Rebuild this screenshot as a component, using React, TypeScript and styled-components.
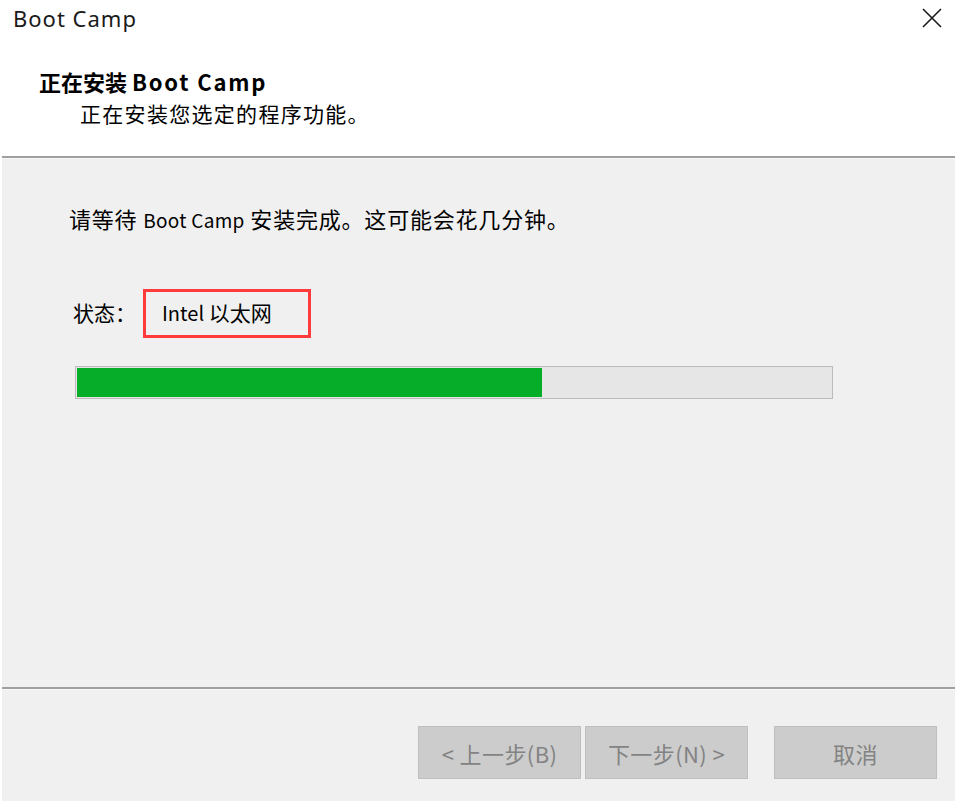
import React from "react";
import styled, { createGlobalStyle } from "styled-components";

const GlobalStyle = createGlobalStyle`
  html, body {
    margin: 0;
    padding: 0;
    background: #ffffff;
  }
  * {
    box-sizing: border-box;
  }
`;

const cjk = `"Noto Sans CJK SC", "Noto Sans", sans-serif`;

const Window = styled.div`
  width: 959px;
  height: 801px;
  background: #ffffff;
  display: flex;
  flex-direction: column;
  font-family: ${cjk};
  color: #000;
  overflow: hidden;
`;

const TitleBar = styled.div`
  height: 36px;
  display: flex;
  align-items: center;
  justify-content: space-between;
  padding: 0 15px 0 13px;
`;

const WindowTitle = styled.span`
  font-family: "Noto Sans", sans-serif;
  font-size: 22px;
  letter-spacing: 1px;
  color: #1a1a1a;
`;

const CloseButton = styled.button`
  width: 24px;
  height: 24px;
  padding: 0;
  border: none;
  background: transparent;
  display: flex;
  align-items: center;
  justify-content: center;
  cursor: pointer;
`;

const Header = styled.div`
  height: 120px;
  padding: 30px 0 0 39px;
  display: flex;
  flex-direction: column;
`;

const HeaderTitle = styled.h1`
  margin: 0;
  font-size: 22px;
  font-weight: 700;
  line-height: 30px;
`;

const Latin = styled.span<{ $size?: number; $spacing?: number }>`
  font-size: ${(p) => p.$size ?? 19}px;
  letter-spacing: ${(p) => p.$spacing ?? 0}px;
`;

const HeaderSub = styled.p`
  margin: 2px 0 0 41px;
  font-size: 21px;
  letter-spacing: 1.3px;
  line-height: 30px;
`;

const Divider = styled.div`
  margin: 0 4px 0 2px;
  height: 3px;
  border-top: 2px solid #a0a0a0;
  border-bottom: 1px solid #f8f8f8;
  flex-shrink: 0;
`;

const Content = styled.div`
  flex: 1;
  margin: 0 4px 0 2px;
  background: #f0f0f0;
  padding: 44px 0 0 67px;
  display: flex;
  flex-direction: column;
`;

const Message = styled.p`
  margin: 0;
  font-size: 22px;
  letter-spacing: 0.8px;
  line-height: 30px;
  white-space: nowrap;
`;

const StatusRow = styled.div`
  margin-top: 54px;
  display: flex;
  align-items: center;
  padding-left: 4px;
`;

const StatusLabel = styled.span`
  font-size: 21px;
  width: 70px;
  padding-bottom: 3px;
`;

const Highlight = styled.div`
  height: 49px;
  width: 168px;
  border: 3px solid #ff3b3b;
  display: flex;
  align-items: center;
  padding: 0 0 3px 16px;
  font-size: 21px;
`;

const Track = styled.div`
  margin: 28px 0 0 6px;
  width: 758px;
  height: 33px;
  border: 1px solid #bcbcbc;
  background: #e6e6e6;
  padding: 1px;
`;

const Fill = styled.div`
  height: 100%;
  background: #05ad28;
`;

const Footer = styled.div`
  margin: 0 4px 0 2px;
  height: 111px;
  background: #f0f0f0;
  display: flex;
  justify-content: flex-end;
  align-items: flex-start;
  padding: 36px 18px 0 0;
`;

const Button = styled.button<{ $gap?: number }>`
  width: 163px;
  height: 53px;
  margin-left: ${(p) => p.$gap ?? 0}px;
  background: #cccccc;
  border: 1px solid #bfbfbf;
  color: #838383;
  font-family: ${cjk};
  font-size: 22px;
  letter-spacing: 0.4px;
  padding: 0;
`;

const progress = 0.617;

const App = () => (
  <>
    <GlobalStyle />
    <Window>
      <TitleBar>
        <WindowTitle>Boot Camp</WindowTitle>
        <CloseButton aria-label="关闭">
          <svg width="20" height="20" viewBox="0 0 20 20">
            <path d="M1 1 L19 19 M19 1 L1 19" stroke="#1a1a1a" strokeWidth="1.6" />
          </svg>
        </CloseButton>
      </TitleBar>
      <Header>
        <HeaderTitle>
          正在安装 <Latin $size={22} $spacing={1.8}>Boot Camp</Latin>
        </HeaderTitle>
        <HeaderSub>正在安装您选定的程序功能。</HeaderSub>
      </Header>
      <Divider />
      <Content>
        <Message>
          请等待 <Latin $spacing={0.3}>Boot Camp</Latin> 安装完成。这可能会花几分钟。
        </Message>
        <StatusRow>
          <StatusLabel>状态：</StatusLabel>
          <Highlight>
            <Latin $size={20}>Intel</Latin>&nbsp;以太网
          </Highlight>
        </StatusRow>
        <Track>
          <Fill style={{ width: `${progress * 100}%` }} />
        </Track>
      </Content>
      <Divider />
      <Footer>
        <Button disabled>&lt; 上一步(B)</Button>
        <Button disabled $gap={4}>下一步(N) &gt;</Button>
        <Button $gap={26}>取消</Button>
      </Footer>
    </Window>
  </>
);

export default App;
